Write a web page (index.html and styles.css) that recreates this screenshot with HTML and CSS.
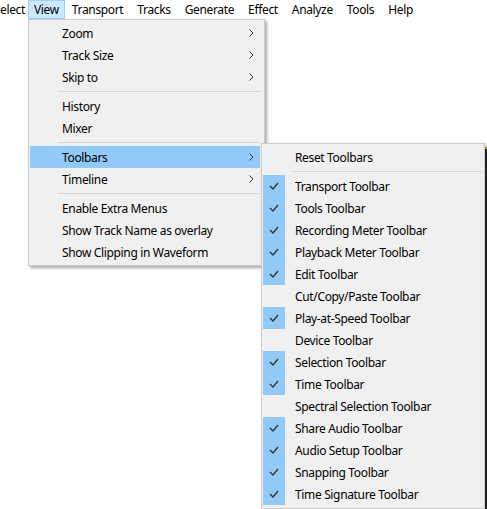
FILE: index.html
```html
<!DOCTYPE html>
<html>
<head>
<meta charset="utf-8">
<link rel="stylesheet" href="styles.css">
</head>
<body>
<div class="menubar">
  <span class="mb-item cut">elect</span>
  <span class="mb-item active">View</span>
  <span class="mb-item">Transport</span>
  <span class="mb-item">Tracks</span>
  <span class="mb-item">Generate</span>
  <span class="mb-item">Effect</span>
  <span class="mb-item">Analyze</span>
  <span class="mb-item">Tools</span>
  <span class="mb-item">Help</span>
</div>

<div class="backdrop"></div>

<div class="menu main-menu">
  <div class="item"><span class="label">Zoom</span><svg class="arrow" width="5" height="8" viewBox="0 0 5 8"><polyline points="0.5,0.5 4,4 0.5,7.5"/></svg></div>
  <div class="item"><span class="label">Track Size</span><svg class="arrow" width="5" height="8" viewBox="0 0 5 8"><polyline points="0.5,0.5 4,4 0.5,7.5"/></svg></div>
  <div class="item"><span class="label">Skip to</span><svg class="arrow" width="5" height="8" viewBox="0 0 5 8"><polyline points="0.5,0.5 4,4 0.5,7.5"/></svg></div>
  <div class="sep"></div>
  <div class="item"><span class="label">History</span></div>
  <div class="item"><span class="label">Mixer</span></div>
  <div class="sep"></div>
  <div class="item hl"><span class="label">Toolbars</span><svg class="arrow" width="5" height="8" viewBox="0 0 5 8"><polyline points="0.5,0.5 4,4 0.5,7.5"/></svg></div>
  <div class="item"><span class="label">Timeline</span><svg class="arrow" width="5" height="8" viewBox="0 0 5 8"><polyline points="0.5,0.5 4,4 0.5,7.5"/></svg></div>
  <div class="sep"></div>
  <div class="item"><span class="label">Enable Extra Menus</span></div>
  <div class="item"><span class="label">Show Track Name as overlay</span></div>
  <div class="item"><span class="label">Show Clipping in Waveform</span></div>
</div>

<div class="menu sub-menu">
  <div class="sitem"><span class="chk"></span><span class="slabel">Reset Toolbars</span></div>
  <div class="ssep"></div>
  <div class="sitem on"><span class="chk"><svg width="10" height="8" viewBox="0 0 10 8"><polyline points="1,4 4,7 9,1"/></svg></span><span class="slabel">Transport Toolbar</span></div>
  <div class="sitem on"><span class="chk"><svg width="10" height="8" viewBox="0 0 10 8"><polyline points="1,4 4,7 9,1"/></svg></span><span class="slabel">Tools Toolbar</span></div>
  <div class="sitem on"><span class="chk"><svg width="10" height="8" viewBox="0 0 10 8"><polyline points="1,4 4,7 9,1"/></svg></span><span class="slabel">Recording Meter Toolbar</span></div>
  <div class="sitem on"><span class="chk"><svg width="10" height="8" viewBox="0 0 10 8"><polyline points="1,4 4,7 9,1"/></svg></span><span class="slabel">Playback Meter Toolbar</span></div>
  <div class="sitem on"><span class="chk"><svg width="10" height="8" viewBox="0 0 10 8"><polyline points="1,4 4,7 9,1"/></svg></span><span class="slabel">Edit Toolbar</span></div>
  <div class="sitem"><span class="chk"></span><span class="slabel">Cut/Copy/Paste Toolbar</span></div>
  <div class="sitem on"><span class="chk"><svg width="10" height="8" viewBox="0 0 10 8"><polyline points="1,4 4,7 9,1"/></svg></span><span class="slabel">Play-at-Speed Toolbar</span></div>
  <div class="sitem"><span class="chk"></span><span class="slabel">Device Toolbar</span></div>
  <div class="sitem on"><span class="chk"><svg width="10" height="8" viewBox="0 0 10 8"><polyline points="1,4 4,7 9,1"/></svg></span><span class="slabel">Selection Toolbar</span></div>
  <div class="sitem on"><span class="chk"><svg width="10" height="8" viewBox="0 0 10 8"><polyline points="1,4 4,7 9,1"/></svg></span><span class="slabel">Time Toolbar</span></div>
  <div class="sitem"><span class="chk"></span><span class="slabel">Spectral Selection Toolbar</span></div>
  <div class="sitem on"><span class="chk"><svg width="10" height="8" viewBox="0 0 10 8"><polyline points="1,4 4,7 9,1"/></svg></span><span class="slabel">Share Audio Toolbar</span></div>
  <div class="sitem on"><span class="chk"><svg width="10" height="8" viewBox="0 0 10 8"><polyline points="1,4 4,7 9,1"/></svg></span><span class="slabel">Audio Setup Toolbar</span></div>
  <div class="sitem on"><span class="chk"><svg width="10" height="8" viewBox="0 0 10 8"><polyline points="1,4 4,7 9,1"/></svg></span><span class="slabel">Snapping Toolbar</span></div>
  <div class="sitem on"><span class="chk"><svg width="10" height="8" viewBox="0 0 10 8"><polyline points="1,4 4,7 9,1"/></svg></span><span class="slabel">Time Signature Toolbar</span></div>
</div>
</body>
</html>
```
FILE: styles.css
```css
html, body {
  margin: 0;
  padding: 0;
  background: #ffffff;
  width: 487px;
  height: 509px;
  overflow: hidden;
  font-family: "Noto Sans", "Liberation Sans", sans-serif;
  font-size: 12px;
  letter-spacing: -0.35px;
  color: #000;
  position: relative;
}

.menubar {
  display: flex;
  height: 19px;
  align-items: stretch;
  white-space: nowrap;
}

.mb-item {
  display: flex;
  align-items: center;
  padding: 0 6px;
  border: 1px solid transparent;
  box-sizing: border-box;
  height: 19px;
  line-height: 17px;
}

.mb-item.cut {
  padding-left: 0;
  padding-right: 0;
  width: 28px;
  border: none;
}

.mb-item.active {
  background: #cce8ff;
  border-color: #99d1ff;
  padding: 0 5px;
}

.backdrop {
  position: absolute;
  left: 485px;
  top: 147px;
  width: 2px;
  height: 362px;
  background: #2d2f37;
  border-top: 2px solid #c8c23a;
}

.menu {
  position: absolute;
  background: #f0f0f0;
  border: 1px solid #cccccc;
  box-sizing: border-box;
  box-shadow: 2px 2px 3px rgba(0, 0, 0, 0.35);
}

.main-menu {
  left: 28px;
  top: 19px;
  width: 237px;
  padding: 2px 4px 2px 1px;
}

.item {
  display: flex;
  align-items: center;
  height: 22px;
  padding: 0 6px 0 32px;
  white-space: nowrap;
}

.item .label {
  flex: 1;
}

.item.hl {
  background: #91c9f7;
}

.arrow {
  display: block;
  fill: none;
  stroke: #333333;
  stroke-width: 1;
}

.sep {
  height: 7px;
  display: flex;
  align-items: center;
  padding-left: 28px;
}

.sep::before {
  content: "";
  display: block;
  flex: 1;
  height: 1px;
  background: #d5d5d5;
}

.sub-menu {
  left: 261px;
  top: 143px;
  width: 224px;
  height: 366px;
  padding: 2px 2px 2px 1px;
}

.sitem {
  display: flex;
  align-items: center;
  height: 22px;
  white-space: nowrap;
}

.chk {
  width: 22px;
  height: 22px;
  display: flex;
  align-items: center;
  justify-content: center;
  flex: none;
}

.sitem.on .chk {
  background: #91c9f7;
}

.chk svg {
  display: block;
  fill: none;
  stroke: #333333;
  stroke-width: 1.3;
}

.slabel {
  padding-left: 10px;
}

.ssep {
  height: 7px;
  display: flex;
  align-items: center;
  padding-left: 28px;
}

.ssep::before {
  content: "";
  display: block;
  flex: 1;
  height: 1px;
  background: #d5d5d5;
}
```
